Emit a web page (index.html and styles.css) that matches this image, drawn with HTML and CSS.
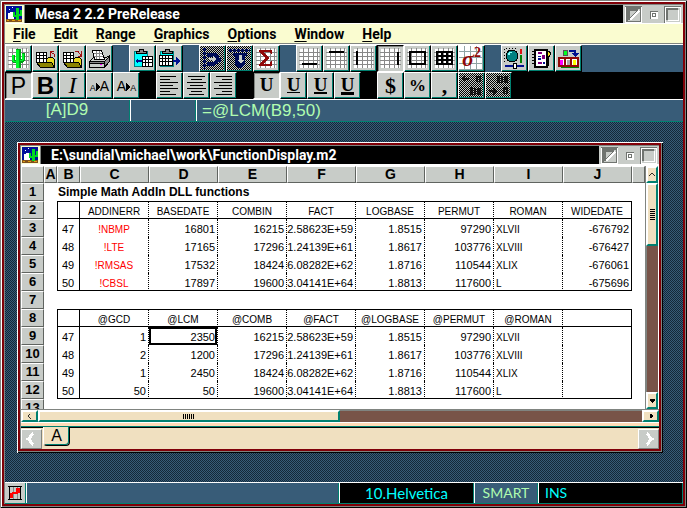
FILE: index.html
```
<!DOCTYPE html>
<html lang="en">
<head>
<meta charset="utf-8">
<title>Mesa 2 2.2 PreRelease</title>
<link rel="stylesheet" href="styles.css">
</head>

<body>
<!-- shared icon parts -->
<svg class="defs" aria-hidden="true">
  <symbol id="grid" viewBox="0 0 25 25">
    <path fill="#fff" d="M3 3h19v19H3z"/>
    <path stroke="#888" d="M2 6.5h21M2 10.5h21M2 14.5h21M2 18.5h21M6.5 2v20M11.5 2v20M16.5 2v20M20.5 2v20"/>
  </symbol>
  <symbol id="mesa" viewBox="0 0 18 18">
    <path fill="#00109a" d="M1 1h16v13H1z"/>
    <path fill="#fff" d="M4 4h1v1H4zM7 2h1v1H7zM3 8h4v6H3zM5 7h4v7H5z"/>
    <path fill="#80501c" d="M1 14h16v3H1z"/>
    <path fill="#e0a010" d="M2 15h2v1H2zM7 15h3v1H7zM13 15h3v1h-3z"/>
    <path fill="#00d820" d="M11 3h3v12h-3zM8 7h2v4H8zM8 10h4v2H8zM15 5h2v5h-2zM13 9h4v2h-4z"/>
  </symbol>
  <symbol id="folder" viewBox="0 0 25 25">
    <path fill="#fff" stroke="#000" d="M3.5 6.5h10v10h-10z"/>
    <path stroke="#000" d="M4 9.5h9M4 12.5h9M6.5 7v9M10.5 7v9"/>
    <path fill="#e8d820" stroke="#000" d="M13.5 13.5l2-2h4l2 2v7l-4-4h-4z"/>
    <path fill="#8c8400" stroke="#000" d="M3.5 16.5l4 5h14l-3-5z"/>
  </symbol>
  <symbol id="hide" viewBox="0 0 17 17">
    <path fill="#707470" d="M0 0h17v17H0z"/>
    <path fill="#fff" d="M1 1v15h15V1h1v16H0V1z"/>
    <path fill="#c8ccc8" d="M3 3h12v12H3z"/>
    <path fill="#707470" d="M3 3h10v2H5v9H3z"/>
    <path fill="none" stroke="#fff" stroke-width="2" d="M5 14L14 5"/>
    <path fill="none" stroke="#707470" d="M4 13L13 4"/>
  </symbol>
  <symbol id="restore" viewBox="0 0 17 17">
    <path fill="#707470" d="M5 5h8v8H5z"/>
    <path fill="#fff" d="M6 6h7v7H6z"/>
    <path fill="#707470" d="M7 7h4v4H7z"/>
    <path fill="#fff" d="M8 8h2v2H8z"/>
  </symbol>
  <symbol id="max" viewBox="0 0 17 17">
    <path fill="#707470" d="M0 0h17v17H0z"/>
    <path fill="#fff" d="M1 1h16v16H1z"/>
    <path fill="#c8ccc8" d="M2 2h14v14H2z"/>
    <path fill="#707470" d="M2 2h12v2H4v10H2z"/>
    <path fill="#fff" d="M4 14h10V4h1v11H4z"/>
  </symbol>
</svg>

<div class="titlebar">
  <span class="sysicon"><svg><use href="#mesa"/></svg></span>
  <h1>Mesa 2 2.2 PreRelease</h1>
  <div class="winbuttons">
    <button aria-label="Hide"><svg><use href="#hide"/></svg></button>
    <button aria-label="Restore"><svg><use href="#restore"/></svg></button>
    <button aria-label="Maximize"><svg><use href="#max"/></svg></button>
  </div>
</div>

<nav class="menu">
  <button><u>F</u>ile</button>
  <button><u>E</u>dit</button>
  <button><u>R</u>ange</button>
  <button><u>G</u>raphics</button>
  <button><u>O</u>ptions</button>
  <button><u>W</u>indow</button>
  <button><u>H</u>elp</button>
</nav>

<div class="toolbar">
  <div class="group">
    <button class="tool" aria-label="New"><svg><use href="#grid"/><path fill="#00a018" d="M10 3h5v19h-5zM6 9h3v5h3v3H7l-1-2zM15 13h1V7h3v7l-2 3h-2z"/><path fill="#00f828" d="M10 4h3v18h-3zM6 9h2v6h3v1H7l-1-2zM14 14h2V8h2v5l-1 2h-3z"/></svg></button>
    <button class="tool" aria-label="Open"><svg><use href="#folder"/><path fill="none" stroke="#a01010" d="M17 10.500V7M22 11l-1-3-4-2M17.500 10V5.500H21"/></svg></button>
    <button class="tool" aria-label="Save"><svg><use href="#folder"/><path fill="none" stroke="#a01010" d="M15 5.500h3l3 4M21.500 5v5.500H18"/></svg></button>
    <button class="tool" aria-label="Print"><svg><path fill="#c8ccc8" stroke="#000" d="M2.500 15.500l4-4h13l3-2v6l-5 6h-15z"/><path fill="#fff" stroke="#000" d="M7.500 13.500l-2-9h9l3 9z"/><path stroke="#888" d="M7 7.500h8M7 10.500h9M9.500 5v8M12.500 5v8"/><path fill="#888" stroke="#000" d="M17.500 15.500l5-5v5l-5 5zM2.500 15.500h15v2h-15z"/><path fill="#f0f" d="M13 18h2v1h-2z"/></svg></button>
  </div>
  <div class="group">
    <button class="tool" aria-label="Copy"><svg><path fill="#0ff" stroke="#008080" d="M4.500 5.500h13v15h-13z"/><path fill="#888" stroke="#000" d="M6.500 7.500v-2h3v-2h4v2h3v2z"/><path fill="#fff" stroke="#000" d="M12.500 10.500h10v10h-10z"/><path stroke="#000" d="M13 13.500h9M13 16.500h9M15.500 11v9M18.500 11v9"/><path fill="#001090" d="M5 15l3-3v2h4v2H8v2z"/></svg></button>
    <button class="tool" aria-label="Paste"><svg><path fill="#0ff" stroke="#008080" d="M3.500 5.500h13v15h-13z"/><path fill="#888" stroke="#000" d="M5.500 7.500v-2h3v-2h4v2h3v2z"/><path fill="#fff" stroke="#000" d="M2.500 9.500h13v10h-13z"/><path stroke="#000" d="M3 12.500h12M3 15.500h12M5.500 10v9M8.500 10v9M11.500 10v9"/><path fill="#001090" d="M16 14h3v-3l4 4-4 4v-3h-3z"/></svg></button>
  </div>
  <div class="group">
    <button class="tool off" aria-label="Insert cells" disabled><svg><path fill="none" stroke="#000c58" stroke-width="3" stroke-dasharray="3 1" d="M4.500 2v21"/><path fill="#000c58" d="M7 7h10v2h2v3h2v4h-3v2h-3v2H7v-4h6V11H7z"/><path fill="#c8ccc8" d="M9 12h4v-2l4 3-4 3v-2H9z"/></svg></button>
    <button class="tool off" aria-label="Delete cells" disabled><svg><path fill="none" stroke="#000c58" stroke-width="3" stroke-dasharray="3 1" d="M2 4.500h21"/><path fill="#000c58" d="M6 7h14v3h-2v8l-3 4h-4l-3-4v-8H6z"/><path fill="#c8ccc8" d="M12 9h3v5h2l-3 3-4-3h2z"/></svg></button>
    <button class="tool" aria-label="Sum"><svg><use href="#grid"/><path fill="#900808" d="M5 4h13v4h-1l-2-2h-5l5 6-6 6h7l1-3h1v5H5v-1l6-7-6-7z"/></svg></button>
  </div>
  <div class="group">
    <button class="tool" aria-label="Bottom border"><svg><use href="#grid"/><path fill="#000" d="M5 17h15v2H5z"/></svg></button>
    <button class="tool" aria-label="Top border"><svg><use href="#grid"/><path fill="#000" d="M5 5h15v2H5z"/></svg></button>
    <button class="tool" aria-label="Left border"><svg><use href="#grid"/><path fill="#000" d="M5 5h2v14H5z"/></svg></button>
    <button class="tool pressed" aria-label="Right border"><svg><use href="#grid"/><path fill="#000" d="M19 6h2v13h-2z"/></svg></button>
    <button class="tool" aria-label="Outline"><svg><use href="#grid"/><path fill="none" stroke="#000" stroke-width="2" d="M5 6h15v12H5z"/></svg></button>
    <button class="tool" aria-label="All borders"><svg><use href="#grid"/><path fill="none" stroke="#000" stroke-width="2" d="M5 6h15v12H5zM5 10h15M5 14h15M10 6v12M15 6v12"/></svg></button>
    <button class="tool sigma"><i>σ</i><sup>2</sup></button>
  </div>
  <div class="group">
    <button class="tool" aria-label="Settings"><svg><path fill="none" stroke="#000" stroke-dasharray="1 2" d="M2.500 3v13M4 2.500h12"/><circle cx="10" cy="10" r="6" fill="#008080" stroke="#000"/><path fill="#8ff" d="M7 6h3v1H8v2H6V7z"/><path fill="#e01010" d="M18 3h2v5h-2z"/><path fill="#008000" d="M18 9h2v8h-2z"/><path fill="#001090" d="M3 19h19v2H3z"/><path fill="#fff" stroke="#000" d="M11.500 17.500h3v5h-3z"/></svg></button>
    <button class="tool" aria-label="Notebook"><svg><path fill="#fff" stroke="#000" stroke-width="2" d="M6 4h12v17H6z"/><path stroke="#000" d="M3 5.500h4M3 8.500h4M3 11.500h4M3 14.500h4M3 17.500h4M19.500 6v14"/><path fill="#f0e020" stroke="#000" d="M18.500 5.500h2l1 2-1 3h-2z"/><path fill="#800080" d="M9 6h4v2H9zM13 9h3v4h-3zM9 16h4v2H9z"/><path fill="#001090" d="M9 10h3v1H9zM9 12h3v2H9zM14 16h2v2h-2z"/></svg></button>
    <button class="tool" aria-label="Chart"><svg><path fill="#0f2" stroke="#555" d="M7.500 4.500h4v5h-4z"/><path fill="none" stroke="#001090" stroke-width="2" d="M13 5h6v4"/><path fill="#001090" d="M15 7h8l-4 4z"/><path fill="#008000" d="M5 20h18v2H5z"/><path fill="#fff" stroke="#900808" stroke-width="2" d="M3 12h19v8H3zM9 12v8M15 12v8"/><path fill="#f0f" d="M4 14h3v5H4z"/><path fill="#aaa" d="M11 14h3v5h-3z"/><path fill="#ff0" d="M17 14h3v5h-3z"/></svg></button>
  </div>
</div>

<div class="toolbar format">
  <div class="group">
    <button class="tool pressed plain">P</button>
    <button class="tool bold">B</button>
    <button class="tool italic">I</button>
    <button class="tool size"><small>A</small><svg class="tri"><path d="M0 0l4 4-4 4z"/></svg>A</button>
    <button class="tool size">A<svg class="tri"><path d="M0 0l4 4-4 4z"/></svg><small>A</small></button>
  </div>
  <div class="group">
    <button class="tool" aria-label="Align left"><svg><path stroke="#000" d="M3 3.500h16M3 6.500h10M3 9.500h18M3 12.500h13M3 15.500h18M3 18.500h10M3 21.500h16"/></svg></button>
    <button class="tool" aria-label="Center"><svg><path stroke="#000" d="M4 3.500h17M7 6.500h11M3 9.500h19M6 12.500h13M3 15.500h19M7 18.500h11M5 21.500h15"/></svg></button>
    <button class="tool" aria-label="Align right"><svg><path stroke="#000" d="M5 3.500h16M11 6.500h10M3 9.500h18M8 12.500h13M3 15.500h18M11 18.500h10M5 21.500h16"/></svg></button>
  </div>
  <div class="group">
    <button class="tool pressed under"><span>U</span></button>
    <button class="tool under"><span class="thin">U</span></button>
    <button class="tool under"><span class="mid">U</span></button>
    <button class="tool under"><span class="thick">U</span></button>
  </div>
  <div class="group">
    <button class="tool money">$</button>
    <button class="tool money percent">%</button>
    <button class="tool money">,</button>
    <button class="tool off dim" aria-label="Fewer decimals" disabled><svg><path fill="#000" d="M2 6l4-4v3h4v2H6v3zM17 3h5v6h-2V5h-1v4h-2zM11 14h3v8h-3zM15 15h2v7h-2zM18 15h4v7h-4z"/></svg></button>
    <button class="tool off dim" aria-label="More decimals" disabled><svg><path fill="#000" d="M11 3h3v7h-3zM15 3h2v7h-2zM18 3h4v7h-4zM3 17h4v-3l4 4-4 4v-3H3zM17 14h5v7h-2v-5h-1v5h-2z"/></svg></button>
  </div>
</div>

<div class="entry">
  <label class="cellref" for="formula">[A]D9</label>
  <span class="entrygap"></span>
  <input id="formula" type="text" value="=@LCM(B9,50)">
</div>

<main class="desktop">
<section class="window">
  <div class="titlebar">
    <span class="sysicon"><svg><use href="#mesa"/></svg></span>
    <h2>E:\sundial\michael\work\FunctionDisplay.m2</h2>
    <div class="winbuttons">
      <button aria-label="Hide"><svg><use href="#hide"/></svg></button>
      <button aria-label="Restore"><svg><use href="#restore"/></svg></button>
      <button aria-label="Maximize"><svg><use href="#max"/></svg></button>
    </div>
  </div>

  <div class="view">
    <div class="sheetbox">
    <table class="sheet">
      <colgroup><col class="num"><col class="a"><col class="num"><col span="8" class="wide"><col></colgroup>
      <thead>
      <tr><th></th><th>A</th><th>B</th><th>C</th><th>D</th><th>E</th><th>F</th><th>G</th><th>H</th><th>I</th><th>J</th><th></th></tr>
      </thead>
      <tbody>
      <tr><th>1</th><td></td><td class="heading" colspan="10">Simple Math AddIn DLL functions</td></tr>
      <tr class="names"><th>2</th><td></td><td></td><td>ADDINERR</td><td>BASEDATE</td><td>COMBIN</td><td>FACT</td><td>LOGBASE</td><td>PERMUT</td><td>ROMAN</td><td>WIDEDATE</td><td></td></tr>
      <tr class="vals"><th>3</th><td></td><td>47</td><td class="err">!NBMP</td><td>16801</td><td>16215</td><td>2.58623E+59</td><td>1.8515</td><td>97290</td><td>XLVII</td><td>-676792</td><td></td></tr>
      <tr class="vals"><th>4</th><td></td><td>48</td><td class="err">!LTE</td><td>17165</td><td>17296</td><td>1.24139E+61</td><td>1.8617</td><td>103776</td><td>XLVIII</td><td>-676427</td><td></td></tr>
      <tr class="vals"><th>5</th><td></td><td>49</td><td class="err">!RMSAS</td><td>17532</td><td>18424</td><td>6.08282E+62</td><td>1.8716</td><td>110544</td><td>XLIX</td><td>-676061</td><td></td></tr>
      <tr class="vals last"><th>6</th><td></td><td>50</td><td class="err">!CBSL</td><td>17897</td><td>19600</td><td>3.04141E+64</td><td>1.8813</td><td>117600</td><td>L</td><td>-675696</td><td></td></tr>
      <tr><th>7</th><td colspan="11"></td></tr>
      <tr class="names"><th>8</th><td></td><td></td><td>@GCD</td><td>@LCM</td><td>@COMB</td><td>@FACT</td><td>@LOGBASE</td><td>@PERMUT</td><td>@ROMAN</td><td></td><td></td></tr>
      <tr class="vals"><th>9</th><td></td><td>47</td><td>1</td><td class="current">2350</td><td>16215</td><td>2.58623E+59</td><td>1.8515</td><td>97290</td><td>XLVII</td><td></td><td></td></tr>
      <tr class="vals"><th>10</th><td></td><td>48</td><td>2</td><td>1200</td><td>17296</td><td>1.24139E+61</td><td>1.8617</td><td>103776</td><td>XLVIII</td><td></td><td></td></tr>
      <tr class="vals"><th>11</th><td></td><td>49</td><td>1</td><td>2450</td><td>18424</td><td>6.08282E+62</td><td>1.8716</td><td>110544</td><td>XLIX</td><td></td><td></td></tr>
      <tr class="vals last"><th>12</th><td></td><td>50</td><td>50</td><td>50</td><td>19600</td><td>3.04141E+64</td><td>1.8813</td><td>117600</td><td>L</td><td></td><td></td></tr>
      <tr><th>13</th><td colspan="11"></td></tr>
      </tbody>
    </table>
    </div>
    <div class="vscroll">
      <button aria-label="Scroll up"><svg viewBox="0 0 10 10"><path fill="none" stroke="#000" d="M2 6l3-3 3 3"/></svg></button>
      <div class="thumb"><i></i></div>
      <div class="track"></div>
      <button aria-label="Scroll down"><svg viewBox="0 0 10 10"><path d="M2 3h7v1L6 7H5L2 4z"/></svg></button>
    </div>
  </div>

  <div class="hscroll">
    <button aria-label="Scroll left"><svg viewBox="0 0 10 10"><path fill="none" stroke="#000" d="M6 2L3 5l3 3"/></svg></button>
    <div class="thumb"><i></i></div>
    <div class="track"></div>
    <button aria-label="Scroll right"><svg viewBox="0 0 10 10"><path d="M4 2h1l3 3-3 3H4z"/></svg></button>
  </div>

  <div class="tabs">
    <button class="page" aria-label="Previous page"><svg viewBox="0 0 20 18"><path fill="none" stroke="#fff" stroke-width="3" d="M12 3c-4 1-2 5-5 6c3 1 1 5 5 6"/></svg></button>
    <button class="tab">A</button>
    <button class="page next" aria-label="Next page"><svg viewBox="0 0 20 18"><path fill="none" stroke="#fff" stroke-width="3" d="M8 3c4 1 2 5 5 6c-3 1-1 5-5 6"/></svg></button>
  </div>
</section>
</main>

<footer class="status">
  <button class="ready" aria-label="Recalculate"><svg viewBox="0 0 20 20"><path fill="none" stroke="#000" d="M4.500 3v14M15.500 3v14M3 3.500h14M3 16.500h14"/><path fill="none" stroke="#888" d="M8.500 4v12M12.500 4v12"/><path fill="#f00" d="M5 10h3v5H5zM11 5h4v5h-4zM7 9h6v2H7z"/></svg></button>
  <span class="message"></span>
  <span class="font">10.Helvetica</span>
  <span class="smart">SMART</span>
  <span class="ins">INS</span>
</footer>
</body>
</html>
```
FILE: styles.css
```
* { box-sizing: border-box; }

html { height: 100%; }

body {
  margin: 0;
  height: 100%;
  display: flex;
  flex-direction: column;
  padding: 5px 4px 4px 5px;
  overflow: hidden;
  background: #385c78;
  font-family: "Liberation Sans", sans-serif;
  box-shadow: inset 1px 1px #808480, inset -1px -1px #000,
              inset 2px 2px #fff, inset -2px -2px #808480,
              inset 0 0 0 4px #800008, inset 5px 5px #808480;
}

button {
  margin: 0;
  padding: 0;
  border: 0;
  background: none;
  color: #000;
  font: inherit;
}

svg { display: block; flex: none; shape-rendering: crispEdges; }

.defs { position: absolute; width: 0; height: 0; }

/* title bars */

.titlebar {
  flex: none;
  display: flex;
  height: 19px;
  background: #000;
  border-bottom: 1px solid #fff;
}

.titlebar h1, .titlebar h2 {
  flex: 1;
  margin: 0;
  padding-left: 10px;
  color: #fff;
  font: bold 14px/18px Roboto, sans-serif;
  white-space: nowrap;
  overflow: hidden;
}

.sysicon {
  width: 20px;
  background: #fafcd0;
  border-right: 1px solid #808480;
}

.sysicon svg { width: 18px; height: 18px; }

.winbuttons {
  display: flex;
  align-items: center;
  justify-content: space-between;
  width: 60px;
  padding: 0 2px;
  background: #c8ccc8;
}

.winbuttons svg { width: 17px; height: 17px; }

.menu {
  flex: none;
  display: flex;
  gap: 18px;
  height: 20px;
  padding-left: 8px;
  background: #fafcd0;
  border-bottom: 1px solid #808480;
}

.menu button { font: bold 14px/18px Roboto, sans-serif; }

.menu u { text-underline-offset: 2px; }

/* toolbars */

.toolbar {
  flex: none;
  display: flex;
  gap: 16px;
  border-top: 1px solid #fff;
}

.format { background: #000; border-top: 0; }

.group { display: flex; }

.tool {
  display: flex;
  align-items: center;
  justify-content: center;
  width: 27px;
  height: 27px;
  background: #c8ccc8;
  border: 1px solid #fff;
  border-color: #fff #000 #000 #fff;
  box-shadow: inset -1px -1px #008070;
}

.tool svg { width: 25px; height: 25px; }

.tool.pressed {
  border-color: #000 #fff #fff #000;
  box-shadow: inset 1px 1px #808480;
}

.tool.off {
  background: conic-gradient(#000 25%, #c8ccc8 0 50%, #000 0 75%, #c8ccc8 0) 0 0 / 2px 2px;
}

.dim svg { opacity: 0.8; }

.plain { padding-top: 2px; font-size: 23px; }
.bold { padding-top: 1px; font-size: 24px; font-weight: bold; }
.italic { font: italic 24px "Liberation Serif", serif; }
.size { font-size: 14px; align-items: baseline; line-height: 27px; }
.size small { font-size: 9px; }
.tool .tri { width: 4px; height: 8px; }
.under { align-items: flex-start; padding-top: 4px; font: bold 19px/15px "Liberation Serif", serif; }
.thin { border-bottom: 1px solid #000; }
.mid { border-bottom: 2px solid #000; }
.thick { border-bottom: 3px solid #000; }
.money { font: bold 22px "Liberation Serif", serif; }
.percent { font-size: 17px; }

.sigma {
  color: #900808;
  font: bold 22px/22px "Liberation Serif", serif;
  background: repeating-linear-gradient(90deg, transparent 0 5px, #90a4a4 0 6px),
              repeating-linear-gradient(#fff 0 5px, #90a4a4 0 6px);
}

.sigma sup { font-size: 14px; line-height: 14px; align-self: flex-start; }

/* cell reference and formula */

.entry {
  flex: none;
  display: flex;
  height: 23px;
  border-top: 1px solid #fff;
  border-bottom: 1px solid #008070;
  color: #b0fcb0;
  font-size: 17px;
  line-height: 20px;
}

.cellref { width: 125px; text-align: center; border-right: 1px solid #008070; }

.entrygap {
  width: 66px;
  border-left: 1px solid #fff;
  border-right: 1px solid #008070;
}

.entry input {
  flex: 1;
  min-width: 0;
  padding: 0 0 0 5px;
  border: 0;
  border-left: 1px solid #fff;
  outline: 0;
  background: none;
  color: inherit;
  font: inherit;
}

/* document window */

.desktop {
  flex: 1;
  min-height: 0;
  display: flex;
  padding: 20px 20px 29px 12px;
  background: conic-gradient(#142838 25%, #385c78 0 50%, #142838 0 75%, #385c78 0) 0 0 / 2px 2px;
}

.window {
  flex: 1;
  min-width: 0;
  display: flex;
  flex-direction: column;
  padding: 4px;
  background: #c8ccc8;
  box-shadow: inset 1px 1px #fff, inset -1px -1px #000, inset -2px -2px #808480,
              inset 3px 3px #800008, inset -4px -4px #800008, inset 4px 4px #808480;
}

.window .titlebar { height: 20px; border-bottom-width: 2px; }

.view { flex: 1; min-height: 0; display: flex; }

.sheetbox { flex: 1; min-width: 0; overflow: hidden; background: #fff; }

.sheet {
  width: 100%;
  table-layout: fixed;
  border-collapse: separate;
  border-spacing: 0;
  font-size: 11px;
}

.num { width: 23px; }
.a { width: 13px; }
.wide { width: 69px; }

.sheet th {
  height: 18px;
  padding: 0;
  background: #c8ccc8;
  border: 1px solid #fff;
  border-color: #fff #606460 #606460 #fff;
  font-size: 13px;
  line-height: 16px;
}

.sheet thead th { height: 17px; font-size: 14px; line-height: 15px; }

.sheet td {
  height: 18px;
  padding: 4px 2px 0 0;
  line-height: 13px;
  text-align: right;
  vertical-align: top;
  white-space: nowrap;
}

.sheet .heading {
  padding: 0 0 0 1px;
  font-size: 12px;
  font-weight: bold;
  line-height: 18px;
  text-align: left;
}

/* ruled blocks run from column B to column J */
.names td:nth-child(n+3):nth-child(-n+11) {
  border-top: 1px solid #000;
  border-bottom: 1px solid #000;
  padding: 3px 0 0;
  font-size: 10px;
  text-align: center;
}

.names td:nth-child(n+4):nth-child(-n+10),
.vals td:nth-child(n+4):nth-child(-n+10) { border-right: 1px dotted #000; }

.names td:nth-child(3), .vals td:nth-child(3) {
  border-left: 1px solid #000;
  border-right: 1px solid #000;
}

.names td:nth-child(11), .vals td:nth-child(11) { border-right: 1px solid #000; }

.last td:nth-child(n+3):nth-child(-n+11) { border-bottom: 1px solid #000; }

.vals td:nth-child(3) { padding-left: 4px; text-align: left; }
.vals td:nth-child(10) { padding-left: 2px; font-size: 10px; text-align: left; }
.sheet .err { padding-right: 0; color: #f00; font-size: 10px; text-align: center; }
.current { box-shadow: inset 0 0 0 2px #000; }

/* scroll bars */

.vscroll {
  flex: none;
  display: flex;
  flex-direction: column;
  width: 14px;
  border-left: 1px solid #808480;
  border-right: 1px solid #fff;
}

.hscroll {
  flex: none;
  display: flex;
  height: 14px;
  border-top: 1px solid #808480;
  border-bottom: 1px solid #fff;
}

.vscroll button, .hscroll button, .thumb {
  display: flex;
  align-items: center;
  justify-content: center;
  background: #f0e0c0;
  border: 2px solid #fff;
  border-right-color: #008070;
  border-bottom-color: #008070;
}

.vscroll button { height: 17px; }
.hscroll button { width: 17px; }
.vscroll svg, .hscroll svg { width: 8px; height: 8px; }
.vscroll .thumb { height: 63px; }
.hscroll .thumb { flex: 300; }
.vscroll .track { flex: 1; background: #785448; border-left: 1px solid #808480; }
.hscroll .track { flex: 304; background: #785448; border-top: 1px solid #808480; }

.vscroll i { width: 5px; height: 12px; background: repeating-linear-gradient(#000 0 1px, #f0e0c0 0 2px); }
.hscroll i { width: 12px; height: 5px; background: repeating-linear-gradient(90deg, #000 0 1px, #f0e0c0 0 2px); }

/* sheet tabs */

.tabs {
  flex: none;
  display: flex;
  height: 26px;
  background: linear-gradient(#ffdcb8 3px, #008070 0 4px, #000 0 5px, #f0e0c0 0);
}

.page {
  width: 21px;
  height: 20px;
  margin-top: 6px;
  background: #c8ccc8;
  border: 1px solid #fff;
  border-right-color: #808480;
  border-bottom-color: #808480;
}

.page svg { width: 19px; height: 18px; }

.next { margin-left: auto; }

.tab {
  width: 27px;
  height: 19px;
  margin: 4px 0 0 1px;
  background: #f0e0c0;
  border: 1px solid #000;
  border-top: 0;
  border-left-color: #fff;
  border-radius: 0 0 4px 4px;
  box-shadow: inset -1px -1px #008070;
  font-size: 16px;
  line-height: 18px;
}

/* status line */

.status {
  flex: none;
  display: flex;
  height: 22px;
  border-top: 1px solid #fff;
  border-bottom: 1px solid #008070;
  font: 15px/20px Lato, sans-serif;
}

.status span { border-left: 1px solid #fff; border-right: 1px solid #008070; }

.ready { width: 21px; background: #c8ccc8; border-right: 1px solid #008070; }
.ready svg { width: 20px; height: 20px; }
.status .message { flex: 1; }
.status .font { width: 135px; background: #000; color: #0ff; text-align: center; }
.status .smart { width: 64px; color: #b0fcb0; font-size: 14px; text-align: center; }
.status .ins { width: 145px; padding-left: 6px; background: #000; color: #0ff; font-size: 14px; }
```
